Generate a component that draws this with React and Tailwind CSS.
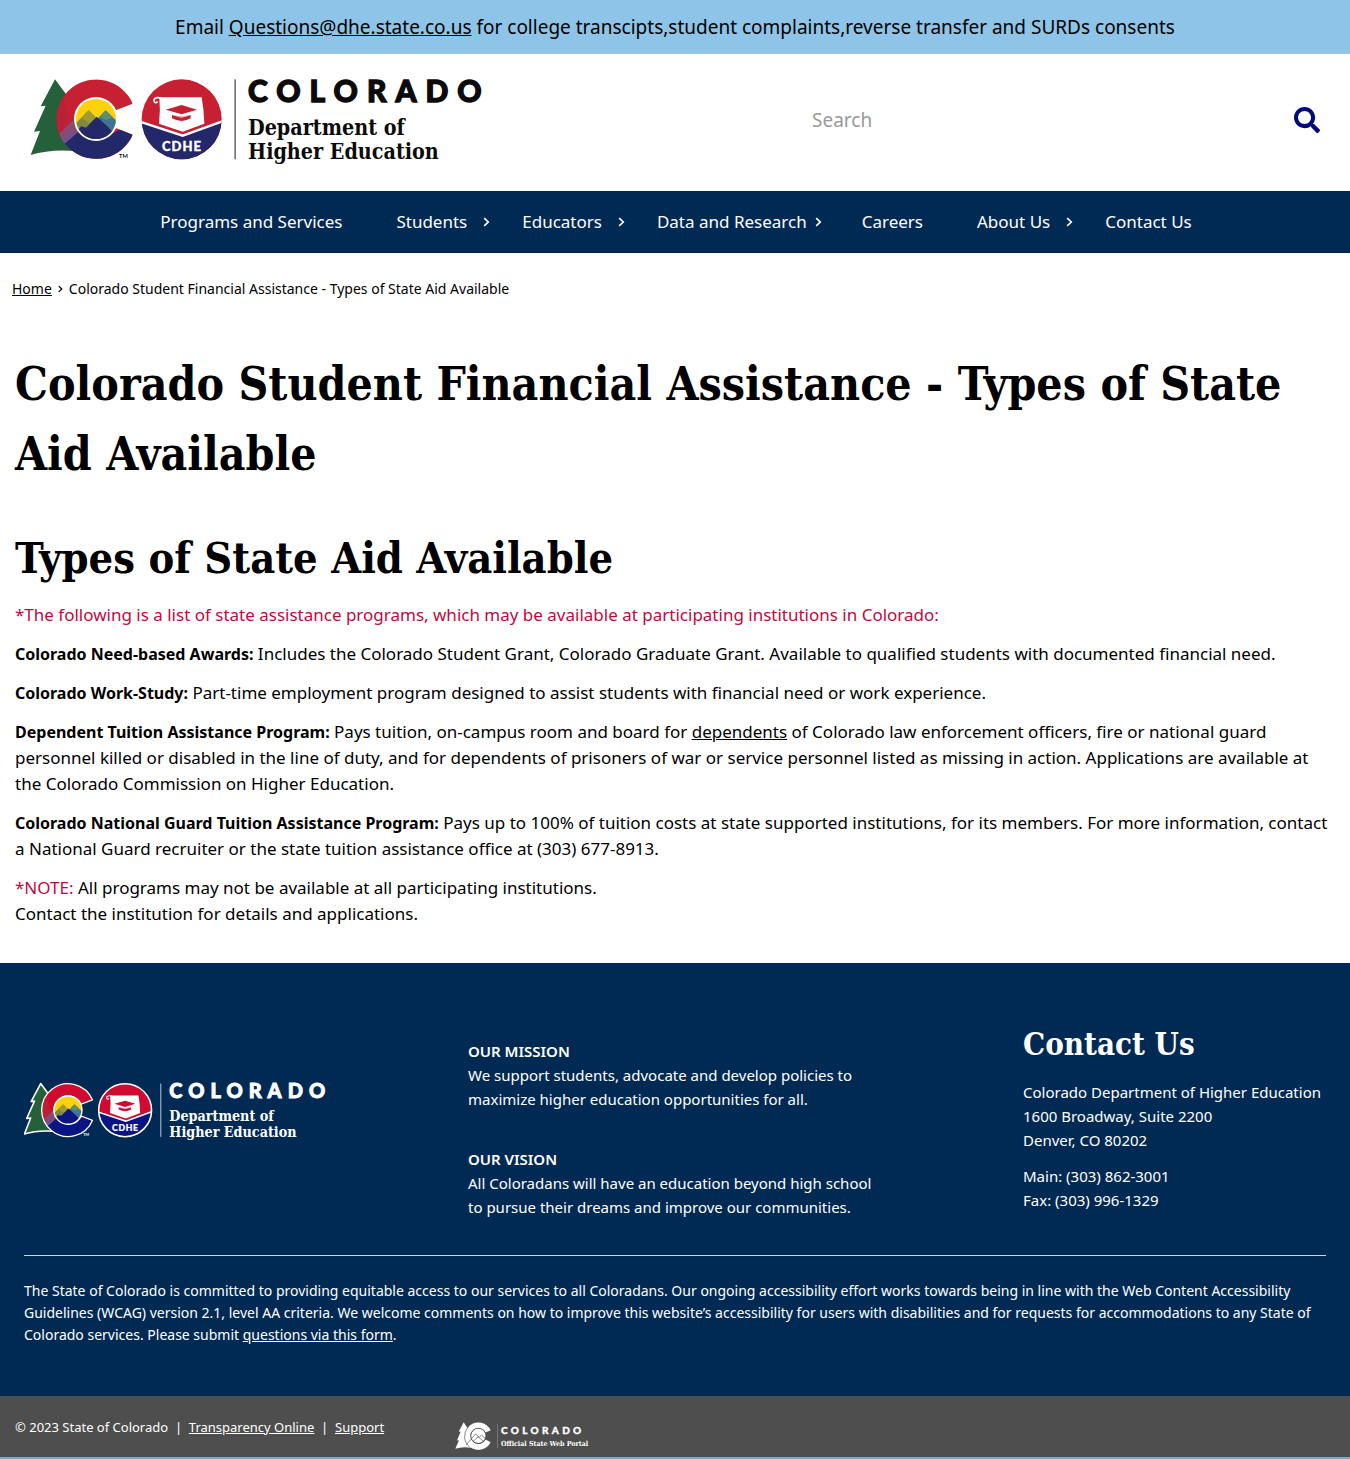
import React from "react";
import { FaSearch } from "react-icons/fa";

const SLAB = "font-['DejaVu_Serif_Condensed','DejaVu_Serif',serif] font-bold";

function Chevron({ className }) {
  return (
    <svg viewBox="0 0 7 10" className={`h-[10px] w-[7px] shrink-0 ${className}`} fill="none" stroke="currentColor" strokeWidth="1.7" aria-hidden="true">
      <path d="M1.2 1.2 5.2 5 1.2 8.8" />
    </svg>
  );
}

function CdheLogo({ className, dark }) {
  const ink = dark ? "#ffffff" : "#0b0b0b";
  const edge = dark ? "#ffffff" : "none";
  const red = dark ? "#d00a30" : "#c72032";
  const blue = dark ? "#0a1583" : "#23286b";
  return (
    <svg viewBox="30 50 1422 270" className={className} role="img" aria-label="Colorado Department of Higher Education">
      <defs>
        <clipPath id={dark ? "c-dark" : "c-light"}>
          <path d="M338 130A119 119 0 1 0 338 223L287 203A64 64 0 1 1 287 150Z" />
        </clipPath>
        <clipPath id={dark ? "d-dark" : "d-light"}>
          <circle cx="228" cy="176" r="60" />
        </clipPath>
        <clipPath id={dark ? "b-dark" : "b-light"}>
          <circle cx="485" cy="177" r="120" />
        </clipPath>
      </defs>
      <path
        d="M105 57 140 104 165 272Q90 266 32 284L60 212 42 214 77 136 62 138Z"
        fill="#24613a"
        stroke={edge}
        strokeWidth="7"
        strokeLinejoin="round"
      />
      <g clipPath={dark ? "url(#c-dark)" : "url(#c-light)"}>
        <rect x="105" y="50" width="250" height="255" fill={red} />
        <path d="M105 130 105 232 128 208 150 190 128 108Z" fill="#b82136" />
        <path d="M105 232 160 178 172 215 134 254Z" fill="#8b4a70" />
        <path d="M118 238 128 262 150 262 176 228 162 210Z" fill="#74508a" />
        <path d="M132 252 176 214 250 235 350 180 350 310 160 310Z" fill={blue} />
      </g>
      <path d="M338 130A119 119 0 1 0 338 223L287 203A64 64 0 1 1 287 150Z" fill="none" stroke={edge} strokeWidth="6" strokeLinejoin="round" />
      <circle cx="228" cy="176" r="66" fill="#ffffff" />
      <g clipPath={dark ? "url(#d-dark)" : "url(#d-light)"}>
        <rect x="160" y="110" width="140" height="135" fill="#fdd20a" />
        <path d="M160 196 206 150 262 206 220 245 160 245Z" fill="#7f8a3c" />
        <path d="M206 150 230 174 207 188 184 172Z" fill="#a29a32" />
        <path d="M200 210 257 150 300 192 300 245 200 245Z" fill="#3f7496" />
        <path d="M257 150 278 170 258 180 240 168Z" fill="#5f8f6a" />
        <path d="M160 222 184 198 198 202 230 169 262 198 275 212 300 205 300 245 160 245Z" fill={blue} />
      </g>
      <text x="297" y="293" fontSize="17" fontWeight="700" fill={ink} fontFamily="Lato, sans-serif">TM</text>

      <g clipPath={dark ? "url(#b-dark)" : "url(#b-light)"}>
        <rect x="360" y="50" width="250" height="255" fill={red} />
        <path d="M360 184 488 226 610 182 610 310 360 310Z" fill={blue} />
        <path d="M360 184 488 226 610 182" fill="none" stroke="#ffffff" strokeWidth="7" />
      </g>
      <circle cx="485" cy="177" r="119" fill="none" stroke={edge} strokeWidth="7" />
      <path d="M418 111H545Q552 150 553 190L488 214 417 190Q422 150 418 111Z" fill="#ffffff" />
      <path d="M426 114Q402 108 402 121 404 132 413 124" fill="none" stroke="#ffffff" strokeWidth="5" />
      <path d="M437 148 485 134 531 148 485 162Z" fill={red} />
      <path d="M456 163 485 169 512 163V174Q485 190 456 174Z" fill={red} />
      <path d="M456 163 485 171 512 163" fill="none" stroke="#ffffff" strokeWidth="2" />
      <text x="486" y="272" fontSize="39" fontWeight="900" fill="#ffffff" stroke="#ffffff" textAnchor="middle" fontFamily="Lato, sans-serif" className="tracking-[3px]">CDHE</text>

      <rect x="643" y="57" width="5" height="240" fill={dark ? "#a9b8c8" : "#777777"} />
      <text x="684" y="124" fontSize="90" fontWeight="900" fill={ink} stroke={ink} strokeWidth="4" fontFamily="Lato, sans-serif" className="tracking-[27px]">COLORADO</text>
      <g fontSize="64" fontWeight="700" fill={ink} fontFamily="'DejaVu Serif Condensed', 'DejaVu Serif', serif">
        <text x="684" y="225">Department of</text>
        <text x="684" y="297">Higher Education</text>
      </g>
    </svg>
  );
}

function PortalLogo() {
  return (
    <svg viewBox="44 122 423 92" className="h-[31px] w-[141px]" role="img" aria-label="Colorado Official State Web Portal">
      <g fill="#ffffff">
        <path d="M70 128 82 146 92 205Q66 200 45 208L56 182 50 183 61 156 55 157Z" />
        <path d="M151 152A41 41 0 1 0 151 188L136 180A24 24 0 1 1 136 159Z" />
        <circle cx="114" cy="169" r="22" />
      </g>
      <g fill="none" stroke="#4e4e4e" strokeWidth="2">
        <path d="M83 143A42 42 0 0 0 88 203" />
        <circle cx="114" cy="169" r="23" />
        <path d="M78 196 106 163 116 174 124 166 138 182M98 186 114 172 130 186" />
      </g>
      <rect x="170" y="134" width="2" height="72" fill="#8a8a8a" />
      <text x="182" y="162" fontSize="30" fontWeight="900" fill="#ffffff" stroke="#ffffff" fontFamily="Lato, sans-serif" className="tracking-[10px]">COLORADO</text>
      <text x="182" y="199" fontSize="21" fontWeight="700" fill="#ffffff" fontFamily="'DejaVu Serif Condensed', 'DejaVu Serif', serif">Official State Web Portal</text>
    </svg>
  );
}

const NAV = [
  { label: "Programs and Services", pad: "pr-[26px]" },
  { label: "Students", pad: "pr-1", chevron: "ml-4" },
  { label: "Educators", pad: "pr-1", chevron: "ml-4" },
  { label: "Data and Research", pad: "pr-3", chevron: "ml-2" },
  { label: "Careers", pad: "pr-[26px]" },
  { label: "About Us", pad: "pr-1", chevron: "ml-4" },
  { label: "Contact Us", pad: "pr-[26px]" },
];

function Lead({ children }) {
  return <strong className="text-[16px] font-bold">{children}</strong>;
}

export default function App() {
  return (
    <div className="bg-white font-['Noto_Sans',sans-serif] text-[17px] leading-[26px] text-black">
      <div className="border-b border-[#a9c3da] bg-[#8dc4e8] pt-[14px] pb-3 text-center text-[19px] leading-[27px]">
        Email <a href="#email" className="underline">Questions@dhe.state.co.us</a> for college transcipts,student complaints,reverse transfer and SURDs consents
      </div>

      <header className="flex items-start justify-between px-[30px] pt-[23px] pb-6">
        <a href="#home"><CdheLogo className="h-[90px] w-[474px]" /></a>
        <form className="mt-[22px] flex w-[508px] items-center justify-between" onSubmit={(e) => e.preventDefault()}>
          <input type="search" aria-label="Search" placeholder="Search" className="h-[42px] min-w-0 flex-1 bg-transparent text-[19px] outline-none placeholder:text-[#999999]" />
          <button type="submit" aria-label="Submit search" className="text-[#000a78]"><FaSearch size={26} /></button>
        </form>
      </header>

      <nav className="flex justify-center bg-[#002a54] text-white">
        <ul className="flex">
          {NAV.map((n) => (
            <li key={n.label}>
              <a href="#nav" className={`flex h-[62px] items-center pl-7 whitespace-nowrap ${n.pad}`}>
                {n.label}
                {n.chevron && <Chevron className={n.chevron} />}
              </a>
            </li>
          ))}
        </ul>
      </nav>

      <nav aria-label="Breadcrumb" className="flex items-center px-3 pt-[23px] text-[14px]">
        <a href="#home" className="underline">Home</a>
        <Chevron className="mx-[5px] scale-75" />
        <span>Colorado Student Financial Assistance - Types of State Aid Available</span>
      </nav>

      <main className="px-[15px] pt-[47px] pb-9">
        <h1 className={`${SLAB} text-[46px] leading-[70px]`}>Colorado Student Financial Assistance - Types of State Aid Available</h1>
        <h2 className={`${SLAB} mt-[37px] text-[43px] leading-[64px]`}>Types of State Aid Available</h2>
        <div className="mt-3 space-y-[13px]">
          <p className="text-[#bf0a40]">*The following is a list of state assistance programs, which may be available at participating institutions in Colorado:</p>
          <p><Lead>Colorado Need-based Awards:</Lead> Includes the Colorado Student Grant, Colorado Graduate Grant. Available to qualified students with documented financial need.</p>
          <p><Lead>Colorado Work-Study:</Lead> Part-time employment program designed to assist students with financial need or work experience.</p>
          <p><Lead>Dependent Tuition Assistance Program:</Lead> Pays tuition, on-campus room and board for <a href="#dependents" className="underline">dependents</a> of Colorado law enforcement officers, fire or national guard personnel killed or disabled in the line of duty, and for dependents of prisoners of war or service personnel listed as missing in action. Applications are available at the Colorado Commission on Higher Education.</p>
          <p><Lead>Colorado National Guard Tuition Assistance Program:</Lead> Pays up to 100% of tuition costs at state supported institutions, for its members. For more information, contact a National Guard recruiter or the state tuition assistance office at (303) 677-8913.</p>
          <p><span className="text-[#bf0a40]">*NOTE:</span> All programs may not be available at all participating institutions.<br />Contact the institution for details and applications.</p>
        </div>
      </main>

      <footer className="bg-[#002a54] px-6 pt-[57px] pb-[50px] text-[15px] leading-6 text-white">
        <div className="grid grid-cols-[444fr_555fr_303fr]">
          <a href="#home" className="self-start pt-[62px]"><CdheLogo dark className="h-[60px] w-[316px]" /></a>
          <div className="max-w-[420px] space-y-9 pt-[19px]">
            <p><strong className="font-semibold">OUR MISSION</strong><br />We support students, advocate and develop policies to maximize higher education opportunities for all.</p>
            <p><strong className="font-semibold">OUR VISION</strong><br />All Coloradans will have an education beyond high school to pursue their dreams and improve our communities.</p>
          </div>
          <div className="space-y-3">
            <h2 className={`${SLAB} text-[31px] leading-[48px]`}>Contact Us</h2>
            <p className="whitespace-nowrap">Colorado Department of Higher Education<br />1600 Broadway, Suite 2200<br />Denver, CO 80202</p>
            <p>Main: (303) 862-3001<br />Fax: (303) 996-1329</p>
          </div>
        </div>
        <p className="mt-9 border-t border-[#ccd4dd] pt-6 text-[14px] leading-[22px]">
          The State of Colorado is committed to providing equitable access to our services to all Coloradans. Our ongoing accessibility effort works towards being in line with the Web Content Accessibility Guidelines (WCAG) version 2.1, level AA criteria. We welcome comments on how to improve this website’s accessibility for users with disabilities and for requests for accommodations to any State of Colorado services. Please submit <a href="#form" className="underline">questions via this form</a>.
        </p>
      </footer>

      <div className="flex h-[63px] items-center border-b-2 border-[#7fa9c9] bg-[#4e4e4e] px-[15px] text-[13px] text-white">
        <p className="w-[440px]">© 2023 State of Colorado &nbsp;|&nbsp; <a href="#transparency" className="underline">Transparency Online</a> &nbsp;|&nbsp; <a href="#support" className="underline">Support</a></p>
        <a href="#portal" className="pt-[17px]"><PortalLogo /></a>
      </div>
    </div>
  );
}
